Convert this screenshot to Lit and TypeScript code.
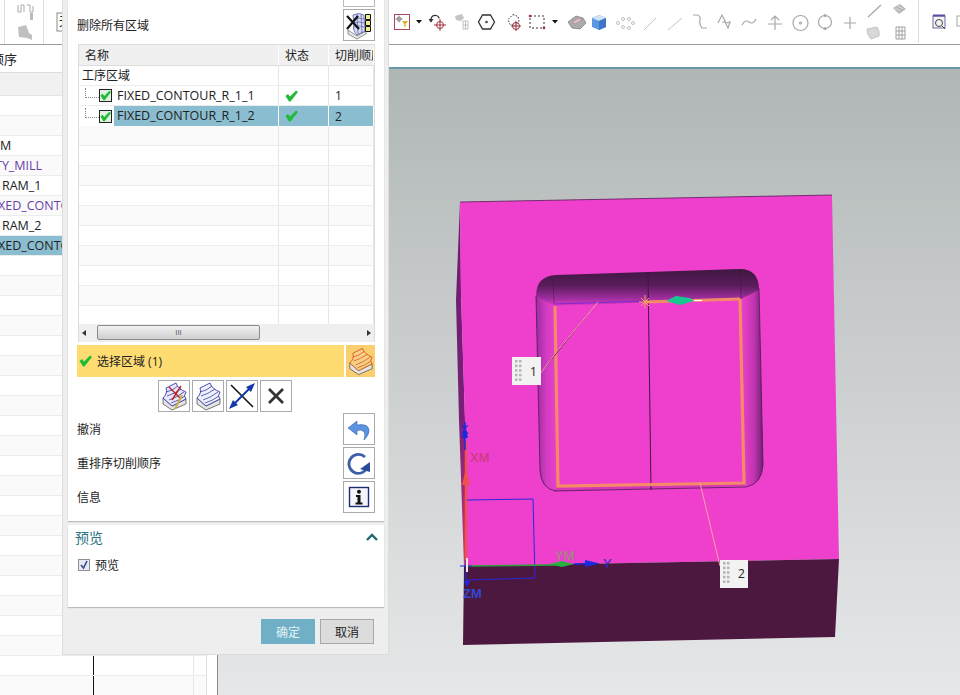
import { LitElement, html, css, svg } from 'lit';
import { customElement } from 'lit/decorators.js';

// visible part of the operation navigator, the dialog sits on top of the rest
const NAV_ROWS = [
  { text: '', color: '', indent: 0 },
  { text: '', color: '', indent: 0 },
  { text: 'M', color: '#222', indent: 0 },
  { text: 'TY_MILL', color: '#6b3fa8', indent: -5 },
  { text: 'RAM_1', color: '#222', indent: 2 },
  { text: 'XED_CONTOUR_R_1_1', color: '#6b3fa8', indent: -2 },
  { text: 'RAM_2', color: '#222', indent: 2 },
  { text: 'XED_CONTOUR_R_1_2', color: '#222', indent: -2, selected: true },
];

const CUT_ROWS = [
  { name: 'FIXED_CONTOUR_R_1_1', order: '1' },
  { name: 'FIXED_CONTOUR_R_1_2', order: '2', selected: true },
];

const check = svg`<path d="M0.500 6 L3 4 L5 6.500 L11 0.500 L13 2 L5.500 11.500 L4 11.500 Z" fill="#22bb38"/>`;

const iconDeleteAll = html`<svg width="30" height="30" viewBox="0 0 30 30">
  <path d="M4 20 L13 26 L22 21 L22 24 L13 29 L4 24 Z" fill="#e8e8e8" stroke="#666" stroke-width=".7"/>
  <path d="M9 5 Q15 2 20 5 L21 21 L13 25 Q8 20 10 14 Z" fill="#d8d8f0" stroke="#5560a8" stroke-width=".8"/>
  <path d="M10 9 Q15 7 20 9 M10 13 Q15 11 20 13 M10 17 Q15 15 20 17 M13 4 L14 24 M17 4 L18 23" stroke="#5560a8" stroke-width=".7" fill="none"/>
  <path d="M3 6 L15 19 M14 6 L3 19" stroke="#111" stroke-width="2.200"/>
  <path d="M21.500 4.500 h5 v5 h-5 z M21.500 10.500 h5 v5 h-5 z M21.500 16.500 h5 v5 h-5 z" fill="#f3ee8a" stroke="#111"/>
</svg>`;

const surface = (hatch: string, fill: string) => svg`
  <path d="M4 17 L13 25 L27 18 L27 23 L13 29 L4 23 Z" fill="#e4e4e4" stroke="#555" stroke-width=".8"/>
  <path d="M4 17 Q9 12 7 7 L17 2 Q19 8 27 11 Q24 15 27 18 L13 25 Z" fill="${fill}" stroke="${hatch}" stroke-width=".9"/>
  <path d="M7 11 Q13 10 19 5 M8 15 Q15 13 22 8 M10 19 Q17 17 25 11 M12 22 Q19 20 26 15" fill="none" stroke="${hatch}" stroke-width=".8"/>`;

const iconSurface = html`<svg width="30" height="30" viewBox="0 0 30 30">${surface('#d05818', '#f8cf88')}</svg>`;
const iconPick = html`<svg width="30" height="30" viewBox="0 0 30 30">${surface('#3a3aa8', '#e8e8f8')}
  <path d="M13 19 L22 5 M10 6 L21 17" stroke="#c02020" stroke-width="1.400"/>
  <path d="M16 28 L23 14" stroke="#c8b040" stroke-width="2"/></svg>`;
const iconStack = html`<svg width="30" height="30" viewBox="0 0 30 30">${surface('#3a3aa8', '#eef0fa')}</svg>`;
const iconReverse = html`<svg width="30" height="30" viewBox="0 0 30 30">
  <path d="M4 4 L26 26" stroke="#111" stroke-width="1.600"/>
  <path d="M7 23 L24 6" stroke="#1238a8" stroke-width="2"/>
  <path d="M28 2 L24 11 L19 6 Z M2 28 L6 19 L11 24 Z" fill="#1238a8"/>
</svg>`;
const iconCross = html`<svg width="30" height="30" viewBox="0 0 30 30">
  <path d="M8 8 L22 22 M22 8 L8 22" stroke="#333" stroke-width="2.800"/>
</svg>`;
const iconUndo = html`<svg width="30" height="30" viewBox="0 0 30 30">
  <path d="M4 14 L13 7 L13 11 Q25 9 25 17 Q25 21 20 26 Q22 19 19 17 Q16 15 13 17 L13 21 Z" fill="#5b93e0" stroke="#2f5fb0" stroke-width=".6"/>
</svg>`;
const iconRedo = html`<svg width="30" height="30" viewBox="0 0 30 30">
  <path d="M21 9 A9.500 9.500 0 1 0 23 20" fill="none" stroke="#3d5fa8" stroke-width="2.800"/>
  <path d="M26 14 L26 24 L16 21 Z" fill="#2a4a98"/>
</svg>`;
const iconInfo = html`<svg width="30" height="30" viewBox="0 0 30 30">
  <rect x="5.500" y="5.500" width="19" height="19" fill="#f4f4fb" stroke="#1c2f70" stroke-width="1.400"/>
  <circle cx="15" cy="9.800" r="2" fill="#111"/>
  <path d="M12 13 h4.500 v7.500 h2 v2 h-7 v-2 h2 v-5.500 h-1.500 z" fill="#111"/>
</svg>`;

const toolbarIcons = svg`
  <rect x="394.500" y="14.500" width="15" height="15" fill="#fff" stroke="#a4485a"/>
  <path d="M399 15.500 v7 M395.500 19 h7" stroke="#888"/><circle cx="399" cy="19" r="2" fill="none" stroke="#888"/>
  <path d="M402 21 h6 l-2.300 3 v3 h-1.400 v-3 z" fill="#e0b020"/>
  <path d="M416 20 h6 l-3 3.500 z" fill="#111"/>
  <path d="M431 22 v-3 q1 -4 5 -3.500 q3 .5 3 3" fill="none" stroke="#333" stroke-width="1.200"/><path d="M428.500 19 l2.500 3.500 l2.500 -3.500 z" fill="#333"/>
  <circle cx="440" cy="25" r="3.500" fill="none" stroke="#a03040"/><path d="M440 19 v12 M434 25 h12" stroke="#a03040"/>
  <path d="M455 16 l7 -2 l2 4 l-3 3 l-5 -1 z" fill="#c4c4c4"/>
  <path d="M463 21 h5 v8 h-5 z M463 25 h5 M465.500 21 v8" fill="none" stroke="#c0c0c0"/>
  <path d="M482.500 15 h8 l4 7 l-4 7 h-8 l-4 -7 z" fill="none" stroke="#333" stroke-width="1.300"/><circle cx="486.500" cy="22" r="1.300" fill="#444"/>
  <path d="M513 14.500 l5 2 l1 5 l-4 4 l-5 -1 l-2 -5 z" fill="none" stroke="#333" stroke-dasharray="1.500 1.500"/>
  <circle cx="516" cy="26" r="3.500" fill="none" stroke="#a03040"/><path d="M516 21 v10 M511 26 h10" stroke="#a03040"/>
  <rect x="530" y="16" width="14" height="12" fill="none" stroke="#333" stroke-dasharray="2 2"/>
  <circle cx="530" cy="16" r="1.300" fill="#a03040"/><circle cx="544" cy="28" r="1.300" fill="#a03040"/>
  <path d="M552 20 h6 l-3 3.500 z" fill="#111"/>
  <path d="M568 22 l8 -6 l7 2 l3 5 l-6 6 l-8 -1 z" fill="#aaa" stroke="#777" stroke-width=".7"/><path d="M572 22 l7 -4 l3 2 l-7 4 z" fill="#e8b8c8" stroke="#888" stroke-width=".5"/>
  <path d="M592 18 l7 -3 l7 3 v9 l-7 3 l-7 -3 z" fill="#5b96e0"/><path d="M592 18 l7 -3 l7 3 l-7 3 z" fill="#cfe4f7"/><path d="M599 21 l7 -3 v9 l-7 3 z" fill="#3f74c8"/>
  <g fill="none" stroke="#c0c0c0"><circle cx="618" cy="23" r="1.500"/><circle cx="623" cy="19" r="1.500"/><circle cx="629" cy="19" r="1.500"/><circle cx="633" cy="23" r="1.500"/><circle cx="623" cy="27" r="1.500"/><circle cx="629" cy="28" r="1.500"/></g>
  <path d="M644 30 L656 18 M668 30 L682 18" stroke="#c4c4c4"/>
  <g fill="none" stroke="#a8a8a8" stroke-width="1.200">
    <path d="M693 15 h4 q4 1 3 5 t2 8 h5"/>
    <path d="M718 23 l4 -8 l4 8 l4 -1 l-2 6 l-3 -6 l-3 0"/>
    <path d="M742 25 q3 -6 7 -3 t7 -3"/>
    <path d="M768 24 h14 M775 16 v14 M771 20 l4 -4 l4 4"/>
    <circle cx="800.500" cy="23" r="7.500"/><circle cx="800.500" cy="23" r="1"/>
    <circle cx="825" cy="22" r="6.500"/><circle cx="825" cy="15.500" r="1"/><circle cx="825" cy="28.500" r="1"/>
    <path d="M844 23 h12 M850 17 v12"/>
    <path d="M868 17 L881 5"/>
  </g>
  <path d="M893 8 l7 -4 l6 5 l-7 5 z" fill="#b8b8b8"/><path d="M895 8 l5 3 M898 6 l5 3" stroke="#eee" stroke-width=".7"/>
  <path d="M867 29 l10 -2 q3 4 2 9 l-8 3 q-4 -4 -4 -10 z" fill="#d8d8d8" stroke="#c4c4c4"/>
  <path d="M896 27 h9 v12 h-9 z M899 27 v12 M902 27 v12 M896 31 h9 M896 35 h9" fill="none" stroke="#a0a0a0"/>
  <path d="M918.500 0 v43" stroke="#ddd"/>
  <rect x="933" y="16" width="12" height="12" fill="#f4f4f4" stroke="#6a6aa0"/><path d="M933 15.500 h12" stroke="#5a4aa0" stroke-width="2"/><circle cx="939" cy="23" r="3.500" fill="none" stroke="#444"/><path d="M942 26 l3 3" stroke="#444"/>
  <rect x="957" y="16" width="12" height="10" fill="#fff" stroke="#9aa"/>
`;

const model = svg`
  <defs>
    <linearGradient id="topWall" x1="0" y1="0" x2="0" y2="1">
      <stop offset="0" stop-color="#3e1740"/><stop offset=".45" stop-color="#5a1c5c"/><stop offset=".8" stop-color="#a02ea0"/><stop offset="1" stop-color="#e23cc4"/>
    </linearGradient>
    <linearGradient id="leftWall" x1="0" y1="0" x2="1" y2="0">
      <stop offset="0" stop-color="#9a2ca0"/><stop offset=".5" stop-color="#d63cc4"/><stop offset="1" stop-color="#ee40cc"/>
    </linearGradient>
    <linearGradient id="rightWall" x1="0" y1="0" x2="1" y2="0">
      <stop offset="0" stop-color="#ee40cc"/><stop offset=".6" stop-color="#c034b0"/><stop offset="1" stop-color="#6e2270"/>
    </linearGradient>
    <linearGradient id="side" x1="0" y1="0" x2="0" y2="1">
      <stop offset="0" stop-color="#6e1c70"/><stop offset=".6" stop-color="#7a1f78"/><stop offset="1" stop-color="#c83a70"/>
    </linearGradient>
  </defs>
  <path d="M460 202 L456 300 L459 420 L464 566 L466 566 L465 420 L461 295 Z" fill="url(#side)"/>
  <path d="M460 202 L832 195 L839 559 L466 566 L465 420 L461 295 Z" fill="#ee40cc"/>
  <path d="M460 202 L832 195" stroke="#5a1c5c" stroke-width=".8"/>
  <path d="M464 566 L839 559 L835 637 L463 645 Z" fill="#4d1840"/>

  <path d="M536 296 Q536 276 556 275 L740 269 Q758 269 759 288 L759 300 L741 299 L555 306 L536 306 Z" fill="url(#topWall)"/>
  <path d="M536 296 L554 306 L558 486 L552 490 Q541 488 540 470 Z" fill="url(#leftWall)"/>
  <path d="M741 299 L759 290 L763 465 Q762 484 746 486 L745 482 Z" fill="url(#rightWall)"/>
  <path d="M556 486 L745 482 L745 486 L556 491 Z" fill="#d636b8"/>
  <path d="M554 491 L746 487 M536 296 L540 470 Q541 489 556 491 M759 288 L763 465 Q762 484 746 487" fill="none" stroke="#4a1a50" stroke-width=".8"/>
  <path d="M553 278 L554 304 M740 271 L741 298" stroke="#3e1740" stroke-opacity=".5"/>
  <path d="M648 272 L651 490" stroke="#3e1740" stroke-width="1"/>
  <path d="M555 306 L558 486 L744 483 L740 299" fill="none" stroke="#f58a68" stroke-width="3.200"/>
  <path d="M645 302 L740 299" stroke="#f58a68" stroke-width="3.200"/>
  <path d="M555 304 L645 301" stroke="#7a28d8" stroke-width="1.200"/>
  <path d="M598 302 L555 354 L540 374" stroke="#f2a0a8" stroke-width="1"/>
  <path d="M700 483 L720 566" stroke="#f2a0a8" stroke-width="1"/>
  <path d="M645 295 v13 M639 302 h12 M641 298 l8 8 M649 298 l-8 8" stroke="#f5a060" stroke-width="1"/>
  <path d="M666 301 L676 296 L690 298 L694 301 L680 305 Z" fill="#18c890"/>
  <path d="M694 300.500 H702" stroke="#fff" stroke-width="1.200"/>

  <path d="M466 442 V566" stroke="#f05050" stroke-width="2.500"/>
  <path d="M466 468 L462 485 L470 485 Z" fill="#f05050"/>
  <path d="M465 422 L465 450" stroke="#1a2ae0" stroke-width="1.500"/>
  <path d="M465 424 L462 438 L468 438 Z" fill="#1a2ae0"/>
  <path d="M467 500 L533 499 L535 578 L467 580" fill="none" stroke="#2a28e0" stroke-width="1"/>
  <path d="M467 566 L560 565" stroke="#2ea040" stroke-width="1.500"/>
  <path d="M550 564 L562 561 L574 564 L562 567 Z" fill="#28b040"/>
  <path d="M574 564 L590 563.500" stroke="#1a2ae0" stroke-width="1.500"/>
  <path d="M585 560 L600 563.500 L585 567 Z" fill="#1a2ae0"/>
  <path d="M460 566 H472 M466 560 V582" stroke="#1a2ae0" stroke-width="1.200"/>
  <path d="M467 558 V572" stroke="#f4e8e0" stroke-width="2"/>
  <path d="M464 581 L470 581 L467 587 Z" fill="#1a2ae0"/>
  <g font-family="Liberation Sans, sans-serif" font-size="13">
    <text x="470" y="462" fill="#c83a70">XM</text>
    <text x="460" y="434" fill="#2a28d0">X</text>
    <text x="555" y="560" fill="#8a9a70">YM</text>
    <text x="603" y="568" fill="#2a28d0">Y</text>
    <text x="463" y="598" fill="#3048d0" font-weight="bold">ZM</text>
  </g>

  <rect x="512" y="357" width="29" height="28" fill="#f2f2f2"/>
  <rect x="720" y="560" width="28" height="28" fill="#f2f2f2"/>
  <g fill="#b4b4b8">
    ${[0, 1, 2, 3, 4].map(
      (i) => svg`<rect x="515" y="${360 + i * 4.6}" width="2.500" height="2.500"/><rect x="519" y="${360 + i * 4.6}" width="2.500" height="2.500"/>
        <rect x="723" y="${562 + i * 4.6}" width="2.500" height="2.500"/><rect x="727" y="${562 + i * 4.6}" width="2.500" height="2.500"/>`
    )}
  </g>
  <g font-family="Open Sans, sans-serif" font-size="12" fill="#222">
    <text x="530" y="376">1</text>
    <text x="738" y="578">2</text>
  </g>
`;

@customElement('app-root')
class AppRoot extends LitElement {
  static styles = css`
    :host {
      display: block;
      position: relative;
      width: 960px;
      height: 695px;
      overflow: hidden;
      background: #fff;
      font-family: 'Open Sans', 'Noto Sans CJK SC', sans-serif;
      font-size: 12px;
      color: #222;
    }
    .page {
      display: grid;
      grid-template-columns: 218px 1fr;
      grid-template-rows: 45px 1fr;
      height: 695px;
    }
    .toolbar {
      grid-column: 1 / 3;
      display: flex;
      border-bottom: 1px solid #9a9a9a;
      box-sizing: border-box;
      background: #fff;
      position: relative;
    }
    .tools-left {
      width: 390px;
      height: 44px;
      flex: none;
      display: block;
    }
    .tools-right {
      width: 570px;
      height: 44px;
      flex: none;
      display: block;
    }
    .combo-text {
      position: absolute;
      left: 59px;
      top: 12px;
      width: 4px;
      overflow: hidden;
    }
    .nav {
      border-right: 1px solid #8a8a8a;
      background: #fff;
      overflow: hidden;
    }
    .nav-head {
      height: 28px;
      line-height: 28px;
      border-bottom: 1px solid #ddd;
      box-sizing: border-box;
      font-size: 13px;
    }
    .nav-head span {
      margin-left: -9px;
    }
    .nav-band {
      height: 23px;
      background: #f1f1f1;
      border-bottom: 1px solid #e4e4e4;
      box-sizing: border-box;
    }
    .nav-row {
      display: grid;
      grid-template-columns: 93px 101px 13px;
      width: 207px;
      height: 20px;
      line-height: 20px;
      font-size: 12.5px;
      box-sizing: border-box;
      border-bottom: 1px solid #ececec;
      border-right: 1px solid #e0e0e0;
      white-space: nowrap;
    }
    .nav-row.odd {
      background: #fafafa;
    }
    .nav-row.selected .name {
      background: #8abdcf;
    }
    .nav-row .name {
      width: 62px;
      overflow: hidden;
    }
    .nav-row .mid {
      border-left: 1px solid #111;
      border-right: 1px solid #e6e6e6;
    }
    .viewport {
      background: linear-gradient(#afb6b5, #c2c6c6 30%, #e6e7e9);
      margin-top: 22px;
      border-top: 2px solid #6b98a9;
      height: 626px;
    }
    .viewport svg {
      display: block;
      width: 742px;
      height: 626px;
    }
    .dialog {
      position: absolute;
      left: 62px;
      top: 0;
      width: 327px;
      height: 655px;
      box-sizing: border-box;
      background: #eeeeee;
      border: 1px solid #dcdcdc;
      border-top: 0;
      padding: 0 4px 0 5px;
      display: flex;
      flex-direction: column;
    }
    .card {
      background: #fff;
      padding: 0 9px;
      box-shadow: 0 1px 1px #bbb;
      display: flex;
      flex-direction: column;
    }
    .main {
      height: 521px;
      box-sizing: border-box;
    }
    .btn {
      width: 32px;
      height: 32px;
      box-sizing: border-box;
      border: 1px solid #aaa;
      background: #fff;
      display: flex;
      align-items: center;
      justify-content: center;
      flex: none;
    }
    .stub {
      height: 7px;
      width: 32px;
      border: 1px solid #bbb;
      border-top: 0;
      box-sizing: border-box;
      align-self: flex-end;
      margin-bottom: 2px;
    }
    .action {
      display: flex;
      align-items: center;
      justify-content: space-between;
      height: 34px;
    }
    .action.first {
      height: 32px;
      margin-bottom: 3px;
    }
    .table {
      margin-left: 1px;
      border: 1px solid #dcdcdc;
      border-bottom: 0;
      width: 297px;
      box-sizing: border-box;
      height: 298px;
      overflow: hidden;
      position: relative;
    }
    .tr {
      display: grid;
      grid-template-columns: 200px 50px 45px;
      height: 20px;
      line-height: 19px;
      box-sizing: border-box;
      border-bottom: 1px solid #ececec;
    }
    .tr.alt {
      background: #fafafa;
    }
    .tr > div {
      border-right: 1px solid #e6e6e6;
      padding-left: 6px;
      white-space: nowrap;
      overflow: hidden;
      display: flex;
      align-items: center;
      box-sizing: border-box;
    }
    .tr.head {
      height: 21px;
      background: #f0f0f0;
      border-bottom: 1px solid #dcdcdc;
    }
    .tr.head > div {
      border-right: 1px solid #fff;
    }
    .tr .root {
      padding-left: 3px;
    }
    .tr .first-cell {
      padding-left: 0;
    }
    .tree {
      width: 14px;
      height: 10px;
      flex: none;
      margin-left: 6px;
      border-left: 1px dotted #888;
      border-bottom: 1px dotted #888;
      box-sizing: border-box;
      margin-top: -6px;
    }
    .box {
      width: 13px;
      height: 13px;
      box-sizing: border-box;
      border: 1px solid #222;
      background: #dff2df;
      flex: none;
      display: flex;
      align-items: center;
      justify-content: center;
      margin-right: 5px;
    }
    .label {
      line-height: 19px;
      font-size: 12.5px;
      align-self: stretch;
      flex: 1;
      padding-left: 3px;
      margin-left: -3px;
    }
    .tr.selected .label,
    .tr.selected > div:not(.first-cell) {
      background: #8abdcf;
    }
    .tr.selected {
      border-bottom: 0;
    }
    .tr.selected > div {
      border-right-color: #fff;
    }
    .scroll {
      position: absolute;
      left: 0;
      right: 0;
      bottom: 0;
      height: 18px;
      background: #efefef;
      display: flex;
      align-items: center;
      justify-content: space-between;
    }
    .thumb {
      position: absolute;
      left: 18px;
      width: 163px;
      top: 1px;
      height: 15px;
      box-sizing: border-box;
      border: 1px solid #8a8a8a;
      border-radius: 2px;
      background: linear-gradient(#f2f2f2, #cfcfcf);
      font-size: 8px;
      line-height: 12px;
      text-align: center;
      color: #555;
    }
    .arrow {
      width: 0;
      height: 0;
      border: 3.500px solid transparent;
      margin: 0 3px;
    }
    .arrow.left {
      border-right: 4px solid #333;
      border-left: 0;
    }
    .arrow.right {
      border-left: 4px solid #333;
      border-right: 0;
    }
    .pick {
      display: flex;
      gap: 2px;
      margin-top: 3px;
      height: 32px;
    }
    .pick-label {
      flex: 1;
      background: #fedc72;
      display: flex;
      align-items: center;
      gap: 4px;
      padding-left: 2px;
    }
    .pick-icon {
      width: 29px;
      background: #fbcf70;
      display: flex;
      align-items: center;
      justify-content: center;
    }
    .btn-row {
      display: flex;
      gap: 2px;
      justify-content: center;
      margin-top: 3px;
      padding-right: 3px;
    }
    .preview {
      margin-top: 4px;
      height: 82px;
      box-sizing: border-box;
      padding: 0 6px 0 7px;
      color: #2a7382;
    }
    .preview-head {
      display: flex;
      justify-content: space-between;
      align-items: center;
      height: 24px;
      font-size: 14px;
    }
    .preview-check {
      display: flex;
      align-items: center;
      gap: 5px;
      color: #222;
      margin: 7px 0 0 3px;
    }
    .tick {
      width: 12px;
      height: 12px;
      box-sizing: border-box;
      border: 1px solid #8a8f98;
      background: #e6e8f2;
      display: flex;
      align-items: center;
      justify-content: center;
    }
    .footer {
      display: flex;
      justify-content: flex-end;
      gap: 5px;
      margin-top: 12px;
      padding-right: 10px;
    }
    .footer button {
      width: 54px;
      height: 25px;
      box-sizing: border-box;
      font: inherit;
      border: 1px solid #a8a8a8;
      background: #dcdcdc;
      color: #222;
      padding: 0;
    }
    .footer button.ok {
      background: #6fb0c7;
      border-color: #6fb0c7;
      color: #e4f2f6;
    }
  `;

  render() {
    return html`
      <div class="page">
        <div class="toolbar">
          <svg class="tools-left" viewBox="0 0 390 44">
            <path d="M4.500 0 V44 M43.500 0 V44" stroke="#ddd"/>
            <path d="M18 5 v7 h3 v-7 h3 v7 M27 5 h3 v7 h3 v-6" fill="none" stroke="#aaa"/>
            <rect x="30" y="13" width="3" height="7" fill="#bbb"/>
            <path d="M18 27 l8 -2 l3 8 l3 2 v5 l-5 -2 l-8 -1 z" fill="#c0c0c0"/>
            <rect x="57" y="13" width="8" height="18" fill="#fff" stroke="#888"/>
          </svg>
          <div class="combo-text">无</div>
          <svg class="tools-right" viewBox="390 0 570 44">${toolbarIcons}</svg>
        </div>
        <div class="nav">
          <div class="nav-head"><span>顺序</span></div>
          <div class="nav-band"></div>
          ${Array.from({ length: 30 }).map((_, i) => {
            const row = NAV_ROWS[i];
            return html`<div class="nav-row ${i % 2 ? 'odd' : ''} ${row?.selected ? 'selected' : ''}">
              <div class="name" style="color:${row?.color || '#222'};text-indent:${row?.indent || 0}px">${row?.text ?? ''}</div>
              <div class="mid"></div>
              <div></div>
            </div>`;
          })}
        </div>
        <div class="viewport">
          <svg viewBox="218 69 742 626">${model}</svg>
        </div>
      </div>

      <div class="dialog">
        <div class="card main">
          <div class="stub"></div>
          <div class="action first"><span>删除所有区域</span><div class="btn">${iconDeleteAll}</div></div>
          ${this._renderTable()}
          <div class="pick">
            <div class="pick-label">
              <svg width="14" height="12" viewBox="0 0 14 12">${check}</svg>
              <span>选择区域 (1)</span>
            </div>
            <div class="pick-icon">${iconSurface}</div>
          </div>
          <div class="btn-row">
            <div class="btn">${iconPick}</div>
            <div class="btn">${iconStack}</div>
            <div class="btn">${iconReverse}</div>
            <div class="btn">${iconCross}</div>
          </div>
          <div class="action"><span>撤消</span><div class="btn">${iconUndo}</div></div>
          <div class="action"><span>重排序切削顺序</span><div class="btn">${iconRedo}</div></div>
          <div class="action"><span>信息</span><div class="btn">${iconInfo}</div></div>
        </div>
        <div class="card preview">
          <div class="preview-head">
            <span>预览</span>
            <svg width="12" height="8" viewBox="0 0 12 8"><path d="M1 7 L6 2 L11 7" fill="none" stroke="#1f6674" stroke-width="2.400"/></svg>
          </div>
          <div class="preview-check">
            <span class="tick"><svg width="10" height="10" viewBox="0 0 10 10"><path d="M2 5 L4.500 8 L8 1" fill="none" stroke="#3a4a8c" stroke-width="1.600"/></svg></span>
            <span>预览</span>
          </div>
        </div>
        <div class="footer">
          <button class="ok">确定</button>
          <button>取消</button>
        </div>
      </div>
    `;
  }

  private _renderTable() {
    return html`<div class="table">
      <div class="tr head"><div>名称</div><div>状态</div><div>切削顺序</div></div>
      <div class="tr"><div class="root">工序区域</div><div></div><div></div></div>
      ${CUT_ROWS.map(
        (r) => html`<div class="tr ${r.selected ? 'selected' : ''}">
          <div class="first-cell">
            <span class="tree"></span>
            <span class="box"><svg width="11" height="11" viewBox="0 0 13 12">${check}</svg></span>
            <span class="label">${r.name}</span>
          </div>
          <div><svg width="14" height="12" viewBox="0 0 14 12">${check}</svg></div>
          <div>${r.order}</div>
        </div>`
      )}
      ${Array.from({ length: 11 }).map(
        (_, i) => html`<div class="tr ${i % 2 ? '' : 'alt'}"><div></div><div></div><div></div></div>`
      )}
      <div class="scroll">
        <span class="arrow left"></span>
        <div class="thumb">III</div>
        <span class="arrow right"></span>
      </div>
    </div>`;
  }
}
